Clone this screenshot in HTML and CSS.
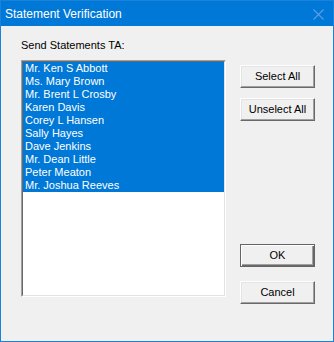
FILE: index.html
```html
<html>
<head>
<title>Statement Verification</title>
<link rel="stylesheet" href="styles.css">
</head>
<body>
<div class="window">
  <div class="titlebar">
    <span class="title">Statement Verification</span>
    <svg class="close" width="11" height="11" viewBox="0 0 11 11">
      <path d="M0.5 0.5 L10.5 10.5 M10.5 0.5 L0.5 10.5" stroke="#5a9fe3" stroke-width="1.1" fill="none"/>
    </svg>
  </div>
  <div class="content">
    <div class="leftcol">
      <div class="label">Send Statements TA:</div>
      <div class="listbox">
        <div class="listinner">
          <div class="item sel">Mr. Ken S Abbott</div>
          <div class="item sel">Ms. Mary Brown</div>
          <div class="item sel">Mr. Brent L Crosby</div>
          <div class="item sel">Karen Davis</div>
          <div class="item sel">Corey L Hansen</div>
          <div class="item sel">Sally Hayes</div>
          <div class="item sel">Dave Jenkins</div>
          <div class="item sel">Mr. Dean Little</div>
          <div class="item sel">Peter Meaton</div>
          <div class="item sel">Mr. Joshua Reeves</div>
        </div>
      </div>
    </div>
    <div class="rightcol">
      <div class="btn">Select All</div>
      <div class="btn second">Unselect All</div>
      <div class="btn default okbtn">OK</div>
      <div class="btn cancel">Cancel</div>
    </div>
  </div>
</div>
</body>
</html>
```

FILE: styles.css
```css
body {
    margin: 0;
    font-family: "Liberation Sans", Arial, sans-serif;
    font-size: 11px;
    color: #000;
}

.window {
    width: 334px;
    height: 342px;
    box-sizing: border-box;
    border: 1px solid #1a82d8;
    background: #f0f0f0;
}

.titlebar {
    height: 25px;
    background: #0078d7;
    color: #fff;
    display: flex;
    align-items: center;
    justify-content: space-between;
    padding: 0 9px 0 4px;
}

.title {
    font-size: 12px;
    padding-top: 1px;
}

.close {
    display: block;
    margin-top: 1px;
}

.content {
    display: flex;
    padding: 13px 0 0 20px;
}

.leftcol {
    display: flex;
    flex-direction: column;
}

.label {
    height: 13px;
    line-height: 13px;
    margin-bottom: 8px;
}

.listbox {
    width: 205px;
    height: 237px;
    box-sizing: border-box;
    border: 1px solid;
    border-color: #a0a0a0 #fff #fff #a0a0a0;
}

.listinner {
    height: 100%;
    box-sizing: border-box;
    border: 1px solid;
    border-color: #696969 #e3e3e3 #e3e3e3 #696969;
    background: #fff;
}

.item {
    height: 13px;
    line-height: 13px;
    padding-left: 2px;
    white-space: nowrap;
}

.item.sel {
    background: #0078d7;
    color: #fff;
}

.rightcol {
    display: flex;
    flex-direction: column;
    margin-left: 14px;
    padding-top: 26px;
}

.btn {
    width: 75px;
    height: 23px;
    box-sizing: border-box;
    border: 1px solid;
    border-color: #fff #696969 #696969 #fff;
    box-shadow: inset -1px -1px #a0a0a0, inset 1px 1px #e3e3e3;
    background: #f0f0f0;
    text-align: center;
    line-height: 20px;
}

.second {
    margin-top: 10px;
}

.okbtn {
    margin-top: 123px;
}

.default {
    border-color: #646464;
    box-shadow: inset 1px 1px #fff, inset -1px -1px #696969, inset -2px -2px #a0a0a0;
}

.cancel {
    margin-top: 14px;
}
```
